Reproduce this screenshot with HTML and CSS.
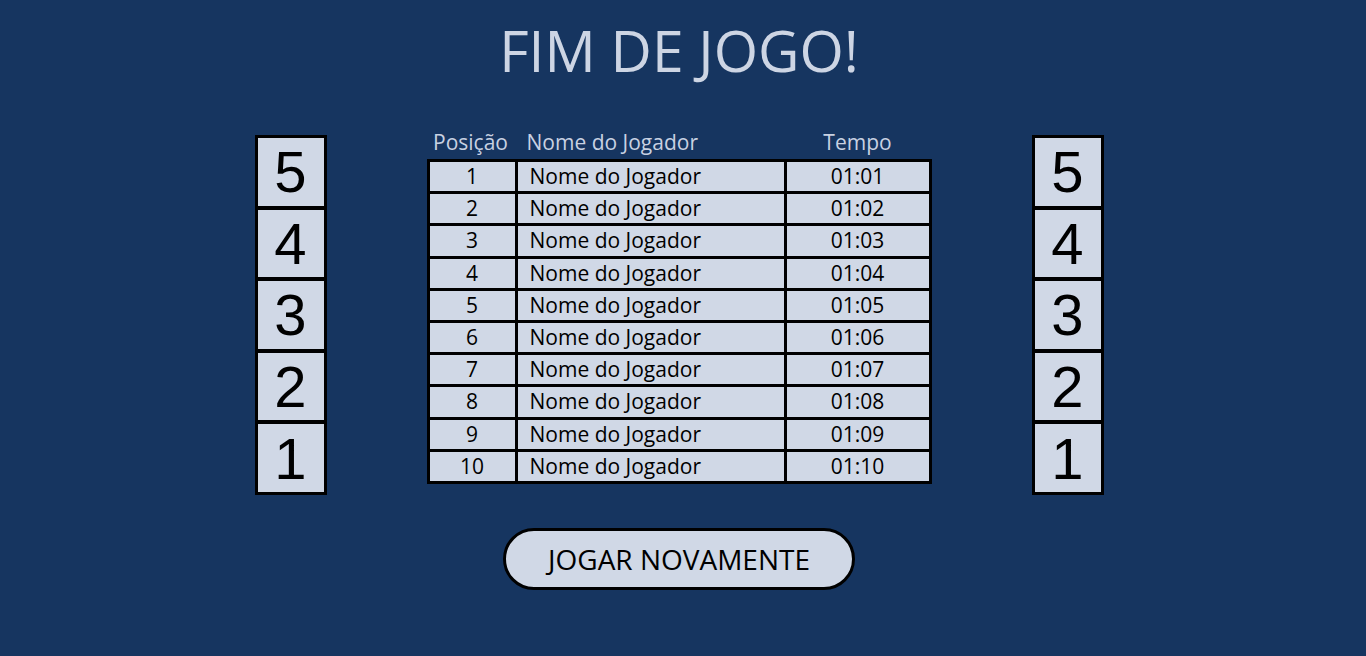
FILE: index.html
```html
<!DOCTYPE html>
<html lang="pt">
<head>
<meta charset="utf-8">
<title>Fim de Jogo</title>
<link rel="stylesheet" href="styles.css">
</head>
<body>
<div class="page">
  <h1 class="title">FIM DE JOGO!</h1>
  <div class="board">
    <div class="stack">
      <div class="box">5</div>
      <div class="box">4</div>
      <div class="box">3</div>
      <div class="box">2</div>
      <div class="box">1</div>
    </div>
    <div class="ranking">
      <div class="head">
        <div class="c-pos">Posição</div>
        <div class="c-name">Nome do Jogador</div>
        <div class="c-time">Tempo</div>
      </div>
      <div class="table">
        <div class="cell c-pos">1</div><div class="cell c-name">Nome do Jogador</div><div class="cell c-time">01:01</div>
        <div class="cell c-pos">2</div><div class="cell c-name">Nome do Jogador</div><div class="cell c-time">01:02</div>
        <div class="cell c-pos">3</div><div class="cell c-name">Nome do Jogador</div><div class="cell c-time">01:03</div>
        <div class="cell c-pos">4</div><div class="cell c-name">Nome do Jogador</div><div class="cell c-time">01:04</div>
        <div class="cell c-pos">5</div><div class="cell c-name">Nome do Jogador</div><div class="cell c-time">01:05</div>
        <div class="cell c-pos">6</div><div class="cell c-name">Nome do Jogador</div><div class="cell c-time">01:06</div>
        <div class="cell c-pos">7</div><div class="cell c-name">Nome do Jogador</div><div class="cell c-time">01:07</div>
        <div class="cell c-pos">8</div><div class="cell c-name">Nome do Jogador</div><div class="cell c-time">01:08</div>
        <div class="cell c-pos">9</div><div class="cell c-name">Nome do Jogador</div><div class="cell c-time">01:09</div>
        <div class="cell c-pos">10</div><div class="cell c-name">Nome do Jogador</div><div class="cell c-time">01:10</div>
      </div>
    </div>
    <div class="stack">
      <div class="box">5</div>
      <div class="box">4</div>
      <div class="box">3</div>
      <div class="box">2</div>
      <div class="box">1</div>
    </div>
  </div>
  <button class="again">JOGAR NOVAMENTE</button>
</div>
</body>
</html>
```
FILE: styles.css
```css
html, body {
  margin: 0;
  padding: 0;
  background: #163560;
  height: 100%;
}
body {
  font-family: "Open Sans", "Noto Sans", sans-serif;
  overflow: hidden;
}
.page {
  display: flex;
  flex-direction: column;
  align-items: center;
  padding-right: 8px;
  padding-top: 12px;
}
.title {
  margin: 0;
  font-weight: 400;
  font-size: 57px;
  line-height: 76px;
  color: #cdd5e4;
}
.board {
  display: flex;
  align-items: flex-start;
  gap: 100px;
  margin-top: 39px;
}
.stack {
  display: flex;
  flex-direction: column;
  border: 1px solid #000;
  background: #000;
  margin-top: 8px;
}
.box {
  box-sizing: border-box;
  width: 70px;
  height: 71.6px;
  border: 2px solid #000;
  background: #d0d8e6;
  display: flex;
  align-items: center;
  justify-content: center;
  font-family: "Liberation Sans", Arial, sans-serif;
  font-size: 58px;
  color: #000;
}
.ranking {
  display: flex;
  flex-direction: column;
}
.head {
  display: grid;
  grid-template-columns: 88px 269px 148px;
  height: 28px;
  line-height: 30px;
  font-size: 21px;
  color: #c8d1e2;
  margin-bottom: 4px;
}
.head .c-pos { text-align: center; }
.head .c-name { padding-left: 12px; }
.head .c-time { text-align: center; }
.table {
  display: grid;
  grid-template-columns: 85px 266px 142px;
  grid-auto-rows: 29.2px;
  gap: 3px;
  border: 3px solid #000;
  background: #000;
  width: 499px;
}
.cell {
  background: #d0d8e6;
  font-size: 21px;
  line-height: 29px;
  color: #000;
  white-space: nowrap;
}
.cell.c-pos { text-align: center; }
.cell.c-name { padding-left: 12px; }
.cell.c-time { text-align: center; }
.again {
  margin-top: 33px;
  width: 352px;
  height: 62px;
  border: 3px solid #000;
  border-radius: 31px;
  background: #d0d8e6;
  font-family: "Open Sans", "Noto Sans", sans-serif;
  font-size: 28px;
  color: #000;
  padding: 0;
  cursor: pointer;
}
```
